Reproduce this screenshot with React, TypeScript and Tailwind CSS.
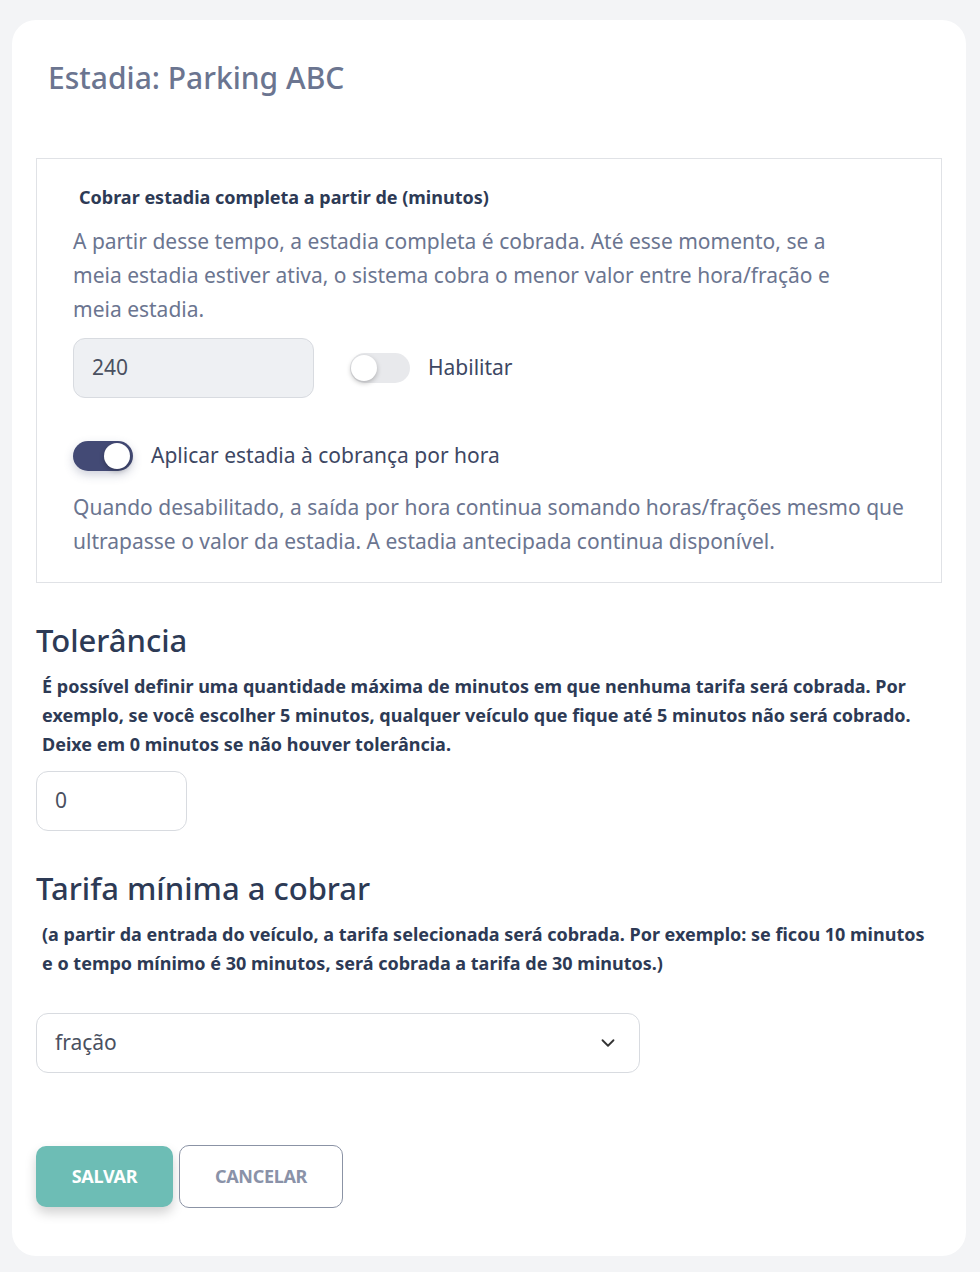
import { ChevronDown } from 'lucide-react';

const Toggle = ({ on }: { on: boolean }) => (
  <div
    className={
      on
        ? 'flex h-[30px] w-[60px] items-center justify-end rounded-full bg-[#434a75] px-[3px] shadow-[0_4px_10px_rgba(67,74,117,0.25)]'
        : 'flex h-[30px] w-[60px] items-center justify-start rounded-full bg-[#e8e9ec] px-[1px]'
    }
  >
    <div className="h-[26px] w-[26px] rounded-full bg-white shadow-[0_2px_5px_rgba(0,0,0,0.25)]" />
  </div>
);

export default function App() {
  return (
    <div
      className="min-h-[1272px] bg-[#f3f4f6] pt-5 pr-[14px] pl-3 text-[#2d3a55]"
      style={{ fontFamily: '"Noto Sans", "Open Sans", sans-serif' }}
    >
      <div className="rounded-[24px] bg-white px-6 pt-[38px] pb-[48px]">
        <h1 className="pl-3 text-[30px] leading-[40px] font-medium text-[#6b7590]">
          Estadia: Parking ABC
        </h1>

        <div className="mt-[60px] border border-[#e0e2e6] px-9 pt-[26px] pb-[24px]">
          <div className="pl-[6px] text-[18px] leading-6 font-bold text-[#2d3a55]">
            Cobrar estadia completa a partir de (minutos)
          </div>
          <p className="mt-[15px] max-w-[780px] text-[21px] leading-[34px] text-[#6b7590]">
            A partir desse tempo, a estadia completa é cobrada. Até esse momento, se a meia
            estadia estiver ativa, o sistema cobra o menor valor entre hora/fração e meia
            estadia.
          </p>
          <div className="mt-[12px] flex items-center">
            <div className="flex h-[60px] w-[241px] items-center rounded-xl border border-[#d8dbe0] bg-[#eef0f3] px-[18px] text-[21px] text-[#4a5060]">
              240
            </div>
            <div className="ml-9">
              <Toggle on={false} />
            </div>
            <span className="ml-[18px] text-[21px] text-[#3d4763]">Habilitar</span>
          </div>
          <div className="mt-[42px] flex items-center">
            <Toggle on />
            <span className="ml-[18px] text-[21px] text-[#3d4763]">
              Aplicar estadia à cobrança por hora
            </span>
          </div>
          <p className="mt-[18px] text-[21px] leading-[34px] text-[#6b7590]">
            Quando desabilitado, a saída por hora continua somando horas/frações mesmo que
            ultrapasse o valor da estadia. A estadia antecipada continua disponível.
          </p>
        </div>

        <h2 className="mt-[37px] text-[31px] leading-[40px] font-medium text-[#2d3a55]">
          Tolerância
        </h2>
        <p className="mt-[12px] pr-[10px] pl-[6px] text-[18px] leading-[29px] font-bold text-[#2d3a55]">
          É possível definir uma quantidade máxima de minutos em que nenhuma tarifa será
          cobrada. Por exemplo, se você escolher 5 minutos, qualquer veículo que fique até 5
          minutos não será cobrado. Deixe em 0 minutos se não houver tolerância.
        </p>
        <div className="mt-[12px] flex h-[60px] w-[151px] items-center rounded-xl border border-[#d8dbe0] px-[18px] text-[21px] text-[#4a5060]">
          0
        </div>

        <h2 className="mt-[37px] text-[31px] leading-[40px] font-medium text-[#2d3a55]">
          Tarifa mínima a cobrar
        </h2>
        <p className="mt-[12px] pr-[10px] pl-[6px] text-[18px] leading-[29px] font-bold text-[#2d3a55]">
          (a partir da entrada do veículo, a tarifa selecionada será cobrada. Por exemplo: se
          ficou 10 minutos e o tempo mínimo é 30 minutos, será cobrada a tarifa de 30
          minutos.)
        </p>
        <div className="mt-[35px] flex h-[60px] w-[604px] items-center justify-between rounded-xl border border-[#d8dbe0] pr-[20px] pl-[18px] text-[21px] text-[#4a5060]">
          <span>fração</span>
          <ChevronDown size={22} strokeWidth={2} className="text-[#333]" />
        </div>

        <div className="mt-[72px] flex items-center gap-[6px]">
          <button className="h-[61px] w-[137px] rounded-[10px] bg-[#6dbdb5] text-[18px] font-bold tracking-[-0.3px] text-white shadow-[0_6px_12px_rgba(0,0,0,0.18)]">
            SALVAR
          </button>
          <button className="h-[63px] w-[164px] rounded-[10px] border border-[#8b93a5] bg-white text-[18px] font-bold tracking-[-0.3px] text-[#8a92a8]">
            CANCELAR
          </button>
        </div>
      </div>
    </div>
  );
}
